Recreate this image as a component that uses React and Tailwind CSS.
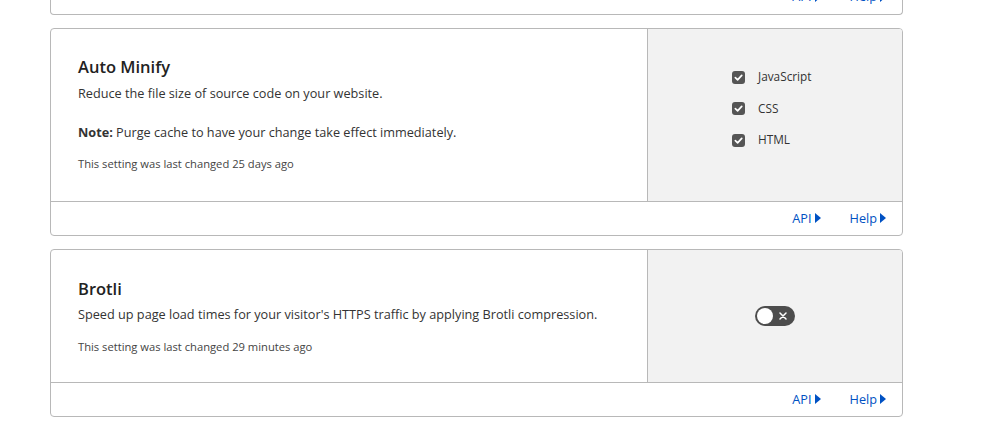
import React from "react";

const font = { fontFamily: '"Segoe UI", "Open Sans", "Noto Sans", sans-serif' };

function Arrow() {
  return (
    <svg width="6" height="10" viewBox="0 0 6 10" className="ml-[3px] inline-block">
      <path d="M0 0 L6 5 L0 10 Z" fill="#0051c3" />
    </svg>
  );
}

function Links() {
  return (
    <>
      <a className="flex items-center">API<Arrow /></a>
      <a className="ml-[29px] flex items-center">Help<Arrow /></a>
    </>
  );
}

function Footer() {
  return (
    <div className="flex h-[34px] items-center justify-end border-t border-[#b8b8b8] pr-[16px] text-[12.7px] text-[#0051c3]">
      <Links />
    </div>
  );
}

function Check({ label }) {
  return (
    <div className="flex items-center h-[18px]">
      <span className="flex h-[13px] w-[13px] items-center justify-center rounded-[3px] bg-[#555]">
        <svg width="9" height="9" viewBox="0 0 10 10">
          <path d="M1.5 5.2 L4 7.6 L8.6 2.6" stroke="#fff" strokeWidth="1.9" fill="none" strokeLinecap="round" strokeLinejoin="round" />
        </svg>
      </span>
      <span className="ml-[13px] text-[11.8px] text-[#333]">{label}</span>
    </div>
  );
}

export default function App() {
  return (
    <div className="min-h-[433px] w-[1007px] bg-white text-[#333]" style={font}>
      <div className="ml-[50px] w-[853px]">
        {/* top card remnant */}
        <div className="-mt-[20px] h-[35px] rounded-b-[4px] border border-t-0 border-[#b8b8b8]">
          <div className="flex h-[34px] items-center justify-end pr-[16px] text-[12.7px] text-[#0051c3]">
            <Links />
          </div>
        </div>

        {/* Auto Minify */}
        <div className="mt-[13px] overflow-hidden rounded-[4px] border border-[#b8b8b8]">
          <div className="flex">
            <div className="w-[597px] border-r border-[#b8b8b8] px-[27px] pt-[27px] pb-[28px]">
              <h3 className="text-[16.5px] font-semibold leading-[22px] text-[#222]">Auto Minify</h3>
              <p className="mt-[5px] text-[12.7px] leading-[20px]">Reduce the file size of source code on your website.</p>
              <p className="mt-[19px] text-[12.7px] leading-[20px]"><b className="font-bold">Note:</b> Purge cache to have your change take effect immediately.</p>
              <p className="mt-[13px] text-[11.2px] leading-[18px] text-[#444]">This setting was last changed 25 days ago</p>
            </div>
            <div className="flex flex-1 flex-col items-start bg-[#f2f2f2] pl-[84px] pt-[39px] gap-[13.5px]">
              <Check label="JavaScript" />
              <Check label="CSS" />
              <Check label="HTML" />
            </div>
          </div>
          <Footer />
        </div>

        {/* Brotli */}
        <div className="mt-[13px] overflow-hidden rounded-[4px] border border-[#b8b8b8]">
          <div className="flex">
            <div className="w-[597px] border-r border-[#b8b8b8] px-[27px] pt-[28px] pb-[26px]">
              <h3 className="text-[16.5px] font-semibold leading-[22px] text-[#222]">Brotli</h3>
              <p className="mt-[4px] text-[12.7px] leading-[20px]">Speed up page load times for your visitor's HTTPS traffic by applying Brotli compression.</p>
              <p className="mt-[14px] text-[11.2px] leading-[18px] text-[#444]">This setting was last changed 29 minutes ago</p>
            </div>
            <div className="flex flex-1 items-center justify-center bg-[#f2f2f2]">
              <div className="flex h-[20px] w-[40px] items-center rounded-full bg-[#4d4d4d] px-[2px]">
                <span className="h-[16px] w-[16px] rounded-full bg-white" />
                <svg width="8" height="8" viewBox="0 0 8 8" className="ml-[6px]">
                  <path d="M1 1 L7 7 M7 1 L1 7" stroke="#fff" strokeWidth="1.5" strokeLinecap="round" />
                </svg>
              </div>
            </div>
          </div>
          <Footer />
        </div>
      </div>
    </div>
  );
}
